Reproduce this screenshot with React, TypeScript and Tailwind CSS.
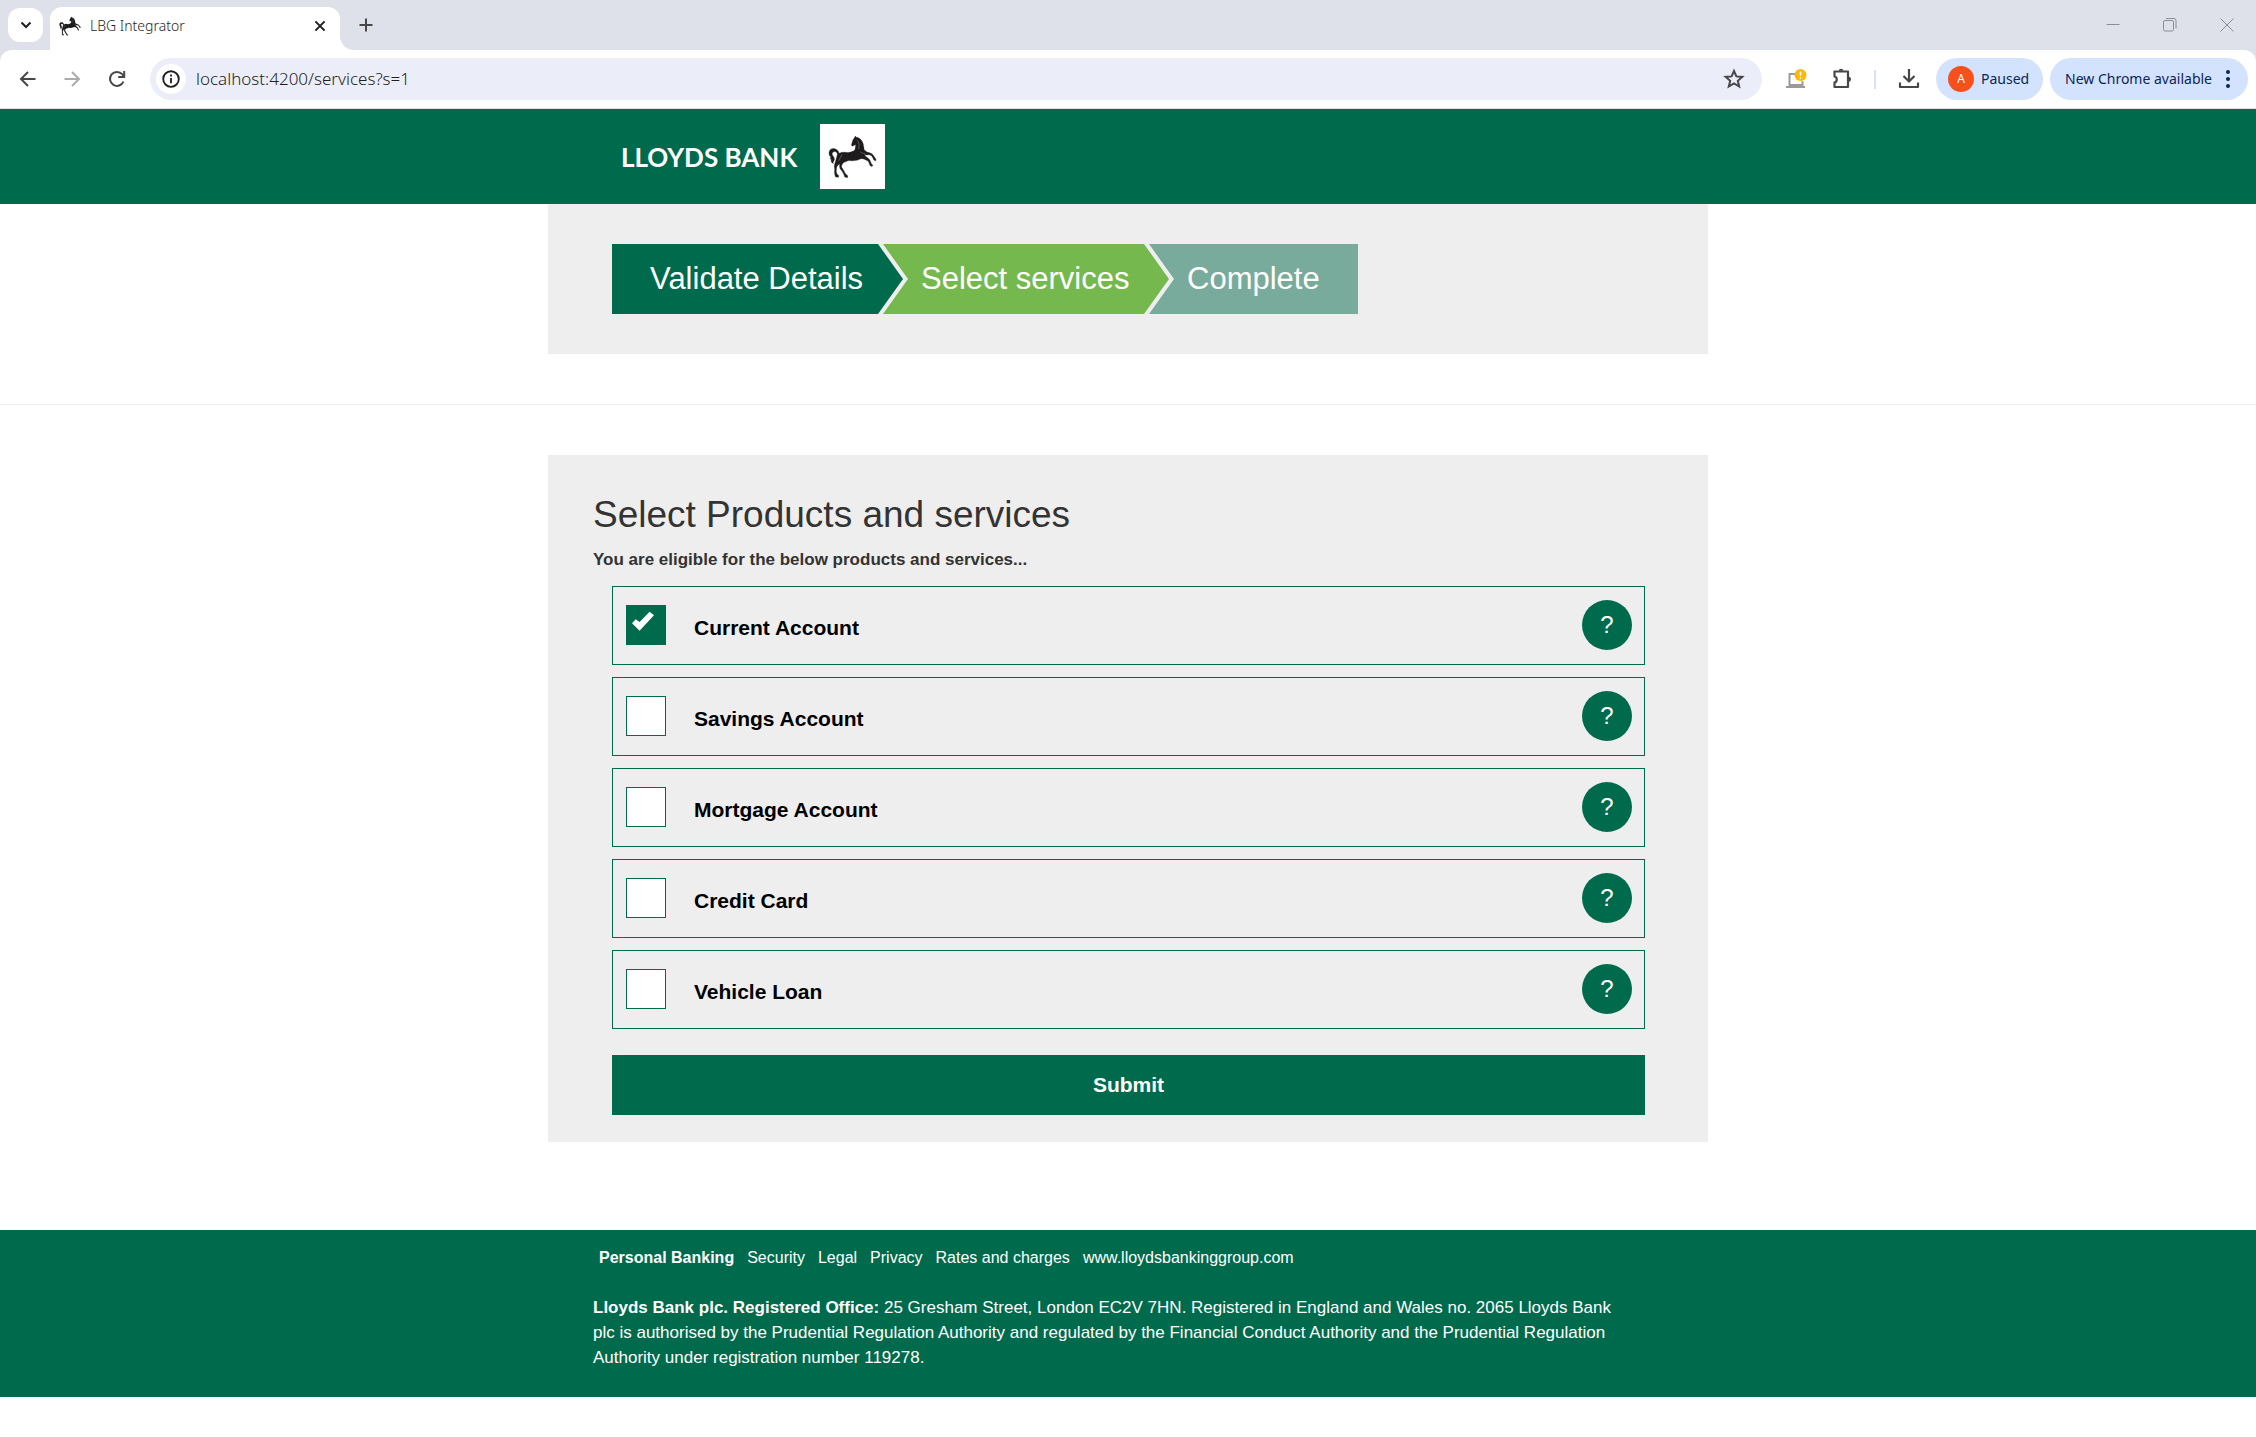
import React, { useState } from "react";

const services = [
  "Current Account",
  "Savings Account",
  "Mortgage Account",
  "Credit Card",
  "Vehicle Loan",
];

const footerLinks = ["Security", "Legal", "Privacy", "Rates and charges", "www.lloydsbankinggroup.com"];

function Horse({ className }: { className: string }) {
  return (
    <svg viewBox="54 62 146 128" className={className} aria-hidden="true">
      <g fill="#1d1b1c" stroke="#1d1b1c" strokeLinejoin="round">
        <path
          strokeWidth="1"
          d="M82 121 C90 112 102 113 112 114 C122 115 130 112 134 106 C137 100 138 94 137 90 C134 91 131 94 128 95 C124 95 123 91 125 87 C127 82 127 77 131 72 C133 70 135 68 135 65 L139 69 C147 70 155 77 158 86 C161 94 159 99 162 106 C165 110 172 114 178 115 C183 116 187 119 190 124 L197 134 L196 139 L191 137 L187 129 C184 124 181 121 176 121 C171 122 166 121 162 121 C167 127 175 131 178 136 C181 141 182 146 184 149 L188 152 L185 156 L179 153 C177 147 176 142 172 139 C166 135 158 131 152 133 C142 138 130 140 118 138 C112 139 105 142 99 145 C96 150 93 154 95 158 C98 164 103 170 105 176 L113 184 L112 189 L104 187 C102 180 98 172 92 165 C88 160 88 154 89 148 C85 150 81 154 80 158 C79 164 78 171 80 177 L86 183 L85 188 L77 187 C73 181 73 171 74 163 C73 158 72 154 74 148 C77 141 79 129 82 121 Z"
        />
        <path
          strokeWidth="1"
          d="M84 124 C82 114 77 109 71 112 C66 114 65 119 68 123 C72 128 75 132 72 138 C70 142 68 144 70 147 C64 145 62 140 64 135 C60 134 60 130 63 128 C57 124 55 115 59 108 C63 101 73 100 79 105 C85 109 88 115 87 121 Z"
        />
        <path d="M137 88 L160 98 L160 122 L122 134 L118 114 L136 108 Z" />
      </g>
      <path d="M141 78 C147 84 148 94 145 104 M96 120 C92 126 89 132 86 139 M150 112 C154 116 159 117 164 117" fill="none" stroke="#7b787a" strokeWidth="2" />
    </svg>
  );
}

function Icon({ children, className = "size-6 text-[#474747]", w = 2 }: { children: React.ReactNode; className?: string; w?: number }) {
  return (
    <svg viewBox="0 0 24 24" fill="none" stroke="currentColor" strokeWidth={w} className={className} aria-hidden="true">
      {children}
    </svg>
  );
}

function TabStrip() {
  return (
    <div className="flex h-[50px] items-end bg-[#dee1e9] pl-2">
      <button aria-label="Search tabs" className="mb-2 grid h-[34px] w-[35px] place-items-center rounded-xl bg-white">
        <Icon className="size-6 text-[#1f1f1f]">
          <path d="M7.500 9.500 12 14l4.500-4.500" />
        </Icon>
      </button>
      <div className="ml-[7px] flex h-[43px] w-[290px] items-center rounded-t-xl bg-white pb-[6px] pr-[10px] pl-[9px]">
        <Horse className="h-5 w-[22px]" />
        <span className="ml-[9px] flex-1 font-['Noto_Sans'] text-sm leading-5 font-light text-[#1f1f1f]">LBG Integrator</span>
        <button aria-label="Close tab">
          <Icon className="size-5 text-[#1f1f1f]">
            <path d="m6.500 6.500 11 11m0-11-11 11" strokeWidth="2.400" />
          </Icon>
        </button>
      </div>
      <svg viewBox="0 0 14 14" className="size-[14px] text-white" aria-hidden="true">
        <path d="M0 0A14 14 0 0 0 14 14H0Z" fill="currentColor" />
      </svg>
      <button aria-label="New tab" className="mb-[13px] grid size-6 place-items-center">
        <Icon>
          <path d="M12 5.500v13M5.500 12h13" />
        </Icon>
      </button>
      <div className="mb-[15px] ml-auto flex items-center gap-[37px] pr-[19px] text-[#8b8e93]">
        <button aria-label="Minimise">
          <svg viewBox="0 0 20 20" className="size-5" fill="none" stroke="currentColor"><path d="M3.500 9.500h13" /></svg>
        </button>
        <button aria-label="Restore">
          <svg viewBox="0 0 20 20" className="size-5" fill="none" stroke="currentColor">
            <rect x="3.500" y="5.500" width="10" height="10.500" rx="1.500" />
            <path d="M6 3.500h8a2 2 0 0 1 2 2v8" />
          </svg>
        </button>
        <button aria-label="Close window">
          <svg viewBox="0 0 20 20" className="size-5" fill="none" stroke="currentColor"><path d="m3.500 3.500 13 13m0-13-13 13" /></svg>
        </button>
      </div>
    </div>
  );
}

function Toolbar() {
  return (
    <div className="bg-[#dee1e9]">
      <div className="flex h-[59px] items-center rounded-t-xl border-b border-[#dfe1e5] bg-white pr-2 pl-4 font-['Noto_Sans'] text-sm">
        <button aria-label="Back"><Icon><path d="M19.500 12H5.500M12 5l-7 7 7 7" /></Icon></button>
        <button aria-label="Forward" className="ml-5"><Icon className="size-6 text-[#ababab]"><path d="M4.500 12h14M12 5l7 7-7 7" /></Icon></button>
        <button aria-label="Reload" className="ml-[21px]">
          <Icon>
            <path d="M18.500 14.500A7 7 0 1 1 17.200 7.200L19 9.300" />
            <path d="M19.200 4v6h-6" />
          </Icon>
        </button>
        <div className="ml-[21px] flex h-[42px] flex-1 items-center rounded-full bg-[#ebeef8] pr-4 pl-[6px]">
          <button aria-label="Site information" className="grid size-[30px] place-items-center rounded-full bg-white">
            <Icon className="size-[22px] text-[#1f1f1f]">
              <circle cx="12" cy="12" r="8.500" />
              <path d="M12 11v5.500M12 7.200v2.200" />
            </Icon>
          </button>
          <input
            aria-label="Address"
            defaultValue="localhost:4200/services?s=1"
            className="ml-[10px] min-w-0 flex-1 bg-transparent text-[17px] leading-6 font-light text-[#1f1f1f] outline-none"
          />
          <button aria-label="Bookmark this tab">
            <Icon><path d="m12 4 2.400 5.400 5.900.5-4.500 3.900 1.400 5.700-5.200-3-5.200 3 1.400-5.700-4.500-3.900 5.900-.5Z" /></Icon>
          </button>
        </div>
        <button aria-label="Device warning" className="ml-[22px]">
          <svg viewBox="0 0 24 24" className="size-6" fill="none">
            <path d="M14 7H5.500v11h13v-4M2 20h19" stroke="#9a9a9a" strokeWidth="2" />
            <circle cx="16.500" cy="8" r="6" fill="#fbb905" />
            <path d="M16.500 4.500v4.300M16.500 10.200v1.500" stroke="#fff" strokeWidth="1.600" />
          </svg>
        </button>
        <button aria-label="Extensions" className="ml-[22px]">
          <Icon>
            <path d="M4.500 4.500h13.500v15.500H4.500V15.500c3-.5 3-5.500 0-6Z" strokeLinejoin="round" strokeWidth="2.200" />
            <path d="M8.800 3.800a2.300 2 0 0 1 4.600 0ZM18.800 9.500a2.800 2.800 0 0 1 0 5.500Z" fill="currentColor" stroke="none" />
          </Icon>
        </button>
        <span className="ml-5 h-[19px] w-[2px] bg-[#d3e3fd]" />
        <button aria-label="Downloads" className="ml-[21px]">
          <Icon><path d="M12 2v12M6.500 9l5.500 5.500L17.500 9M3 15.500V20h18v-4.500" strokeLinejoin="round" strokeWidth="2.200" /></Icon>
        </button>
        <button className="ml-[15px] flex h-[42px] w-[107px] items-center gap-[7px] rounded-full bg-[#d3e3fd] pl-3 text-[#0b2558]">
          <span className="grid size-[26px] place-items-center rounded-full bg-[#f6511d] text-xs leading-4 text-white">A</span>
          <span className="leading-5">Paused</span>
        </button>
        <button className="ml-[7px] flex h-[42px] w-[198px] items-center justify-between rounded-full bg-[#d3e3fd] pr-2 pl-[15px] text-[#0b2558]">
          <span className="leading-5 whitespace-nowrap">New Chrome available</span>
          <svg viewBox="0 0 24 24" className="size-6" fill="currentColor" aria-hidden="true">
            <circle cx="12" cy="5" r="2" />
            <circle cx="12" cy="12" r="2" />
            <circle cx="12" cy="19" r="2" />
          </svg>
        </button>
      </div>
    </div>
  );
}

function ServiceRow({ name, initial }: { name: string; initial: boolean }) {
  const [checked, setChecked] = useState(initial);
  return (
    <li className="flex h-[79px] items-start justify-between border border-[#006a4d] pr-3 pl-[13px]">
      <label className="flex flex-1 items-start">
        <span className="mt-[18px] grid size-10">
          <input
            type="checkbox"
            checked={checked}
            onChange={() => setChecked(!checked)}
            className="col-start-1 row-start-1 size-10 appearance-none border border-[#006a4d] bg-white checked:bg-[#006a4d]"
          />
          {checked && (
            <svg viewBox="0 0 40 40" className="pointer-events-none col-start-1 row-start-1 size-10" aria-hidden="true">
              <path d="M6 18.300 9.700 14.300 13.600 17 23.600 6.700 28 10.300 13.600 25.700Z" fill="#fff" />
            </svg>
          )}
        </span>
        <span className="mt-[26px] ml-7 text-[21px] leading-[30px] font-bold text-black">{name}</span>
      </label>
      <button aria-label={`About ${name}`} className="mt-[13px] size-[50px] rounded-full bg-[#006a4d] text-2xl leading-[50px] text-white">
        ?
      </button>
    </li>
  );
}

export default function App() {
  return (
    <div className="min-h-screen bg-white font-['Liberation_Sans',Arial,sans-serif] text-[#333]">
      <TabStrip />
      <Toolbar />
      <header className="bg-[#006a4d]">
        <div className="mx-auto flex max-w-[1160px] items-center px-[73px] py-[15px]">
          <span className="w-[199px] font-[Lato,sans-serif] text-[26px] leading-8 font-bold text-white">LLOYDS BANK</span>
          <span className="grid size-[65px] place-items-center bg-white">
            <Horse className="h-[43px] w-[49px]" />
          </span>
        </div>
      </header>

      <nav aria-label="Progress" className="mx-auto max-w-[1160px] bg-[#eee] px-16 py-10">
        <ol className="flex text-[31px] leading-[70px] whitespace-nowrap text-white">
          <li className="w-[291px] bg-[#006a4d] pl-[38px] [clip-path:polygon(0_0,266px_0,100%_50%,266px_100%,0_100%)]">Validate Details</li>
          <li className="-ml-5 w-[286px] bg-[#75b94e] pl-[38px] [clip-path:polygon(0_0,261px_0,100%_50%,261px_100%,0_100%,25px_50%)]">Select services</li>
          <li className="-ml-5 w-[209px] bg-[#78ab9b] pl-[38px] [clip-path:polygon(0_0,100%_0,100%_100%,0_100%,25px_50%)]">Complete</li>
        </ol>
      </nav>

      <hr className="my-[50px] border-[#eee]" />

      <main className="mx-auto max-w-[1160px] bg-[#eee] px-[45px] pt-10 pb-[27px]">
        <h1 className="text-[37px] leading-10">Select Products and services</h1>
        <p className="mt-[13px] text-[17px] leading-6 font-bold">You are eligible for the below products and services...</p>
        <form className="mt-[14px] pr-[18px] pl-[19px]" onSubmit={(e) => e.preventDefault()}>
          <ul className="flex flex-col gap-3">
            {services.map((name, i) => (
              <ServiceRow key={name} name={name} initial={i === 0} />
            ))}
          </ul>
          <button type="submit" className="mt-[26px] h-[60px] w-full bg-[#006a4d] text-[21px] leading-[30px] font-bold text-white">
            Submit
          </button>
        </form>
      </main>

      <footer className="mt-[88px] bg-[#006a4d] text-white">
        <div className="mx-auto max-w-[1160px] px-[45px] pt-4 pb-[27px]">
          <nav aria-label="Footer" className="flex gap-[13px] pl-[6px] text-base leading-6">
            <a href="#personal" className="font-bold">Personal Banking</a>
            {footerLinks.map((text) => (
              <a key={text} href={`#${text}`}>{text}</a>
            ))}
          </nav>
          <p className="mt-[25px] max-w-[1036px] text-[17px] leading-[25px]">
            <strong>Lloyds Bank plc. Registered Office:</strong> 25 Gresham Street, London EC2V 7HN. Registered in England and Wales no. 2065 Lloyds Bank plc is authorised by the Prudential Regulation Authority and regulated by the Financial Conduct Authority and the Prudential Regulation Authority under registration number 119278.
          </p>
        </div>
      </footer>
    </div>
  );
}
